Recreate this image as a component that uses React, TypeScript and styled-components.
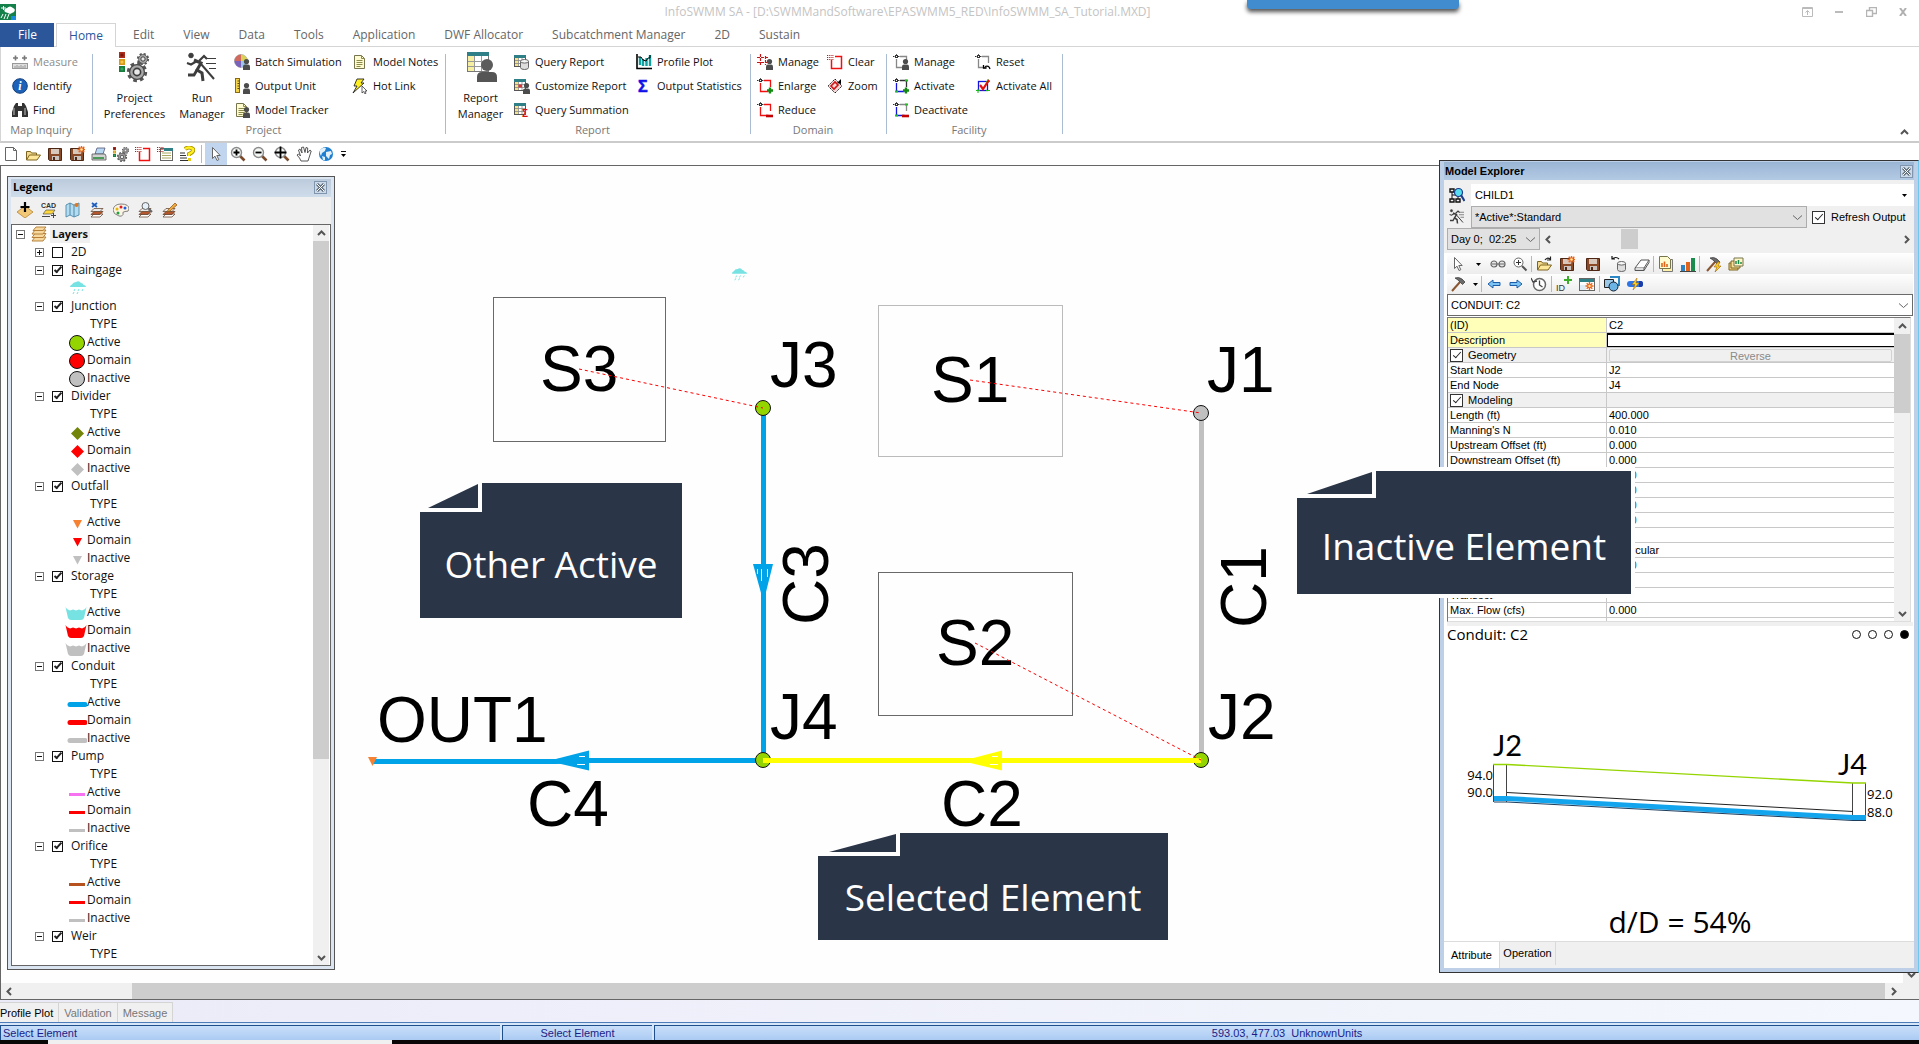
import React, { ReactNode } from "react";
import styled, { createGlobalStyle } from "styled-components";

const UI = `"Open Sans", "Noto Sans", sans-serif`;
const ARIAL = `"Liberation Sans", Arial, sans-serif`;

const Global = createGlobalStyle`
  *, *::before, *::after { box-sizing: border-box; }
  body { margin: 0; background: #fff; color: #111; font: 11px/16px ${UI}; overflow: hidden; }
  button, select, input { font: inherit; color: inherit; margin: 0; }
  button { border: 0; padding: 0; background: none; }
  svg { display: block; flex: none; }
`;

/* ---------- icon drawing parts ---------- */

const Svg = ({ s = 16, v = 16, children }: { s?: number; v?: number; children: ReactNode }) => (
  <svg width={s} height={s} viewBox={`0 0 ${v} ${v}`} aria-hidden="true">{children}</svg>
);
const Person = () => (
  <g fill="#4c4c4c"><circle cx="12.5" cy="7.5" r="2.6" /><path d="M9 16v-3.5q0-2 2-2h3q2 0 2 2V16z" /></g>
);
const Sheet = () => (
  <g>
    <rect x=".5" y="1.5" width="11" height="11" fill="#fff" stroke="#555" />
    <path d="M0 1h12v3H0z" fill="#2f7f86" />
    <path d="M1 4h3v8H1z" fill="#f1e48a" />
    <path d="M1 6.5h10M1 9.5h10M4.5 4v8M8 4v8" stroke="#888" strokeWidth=".8" />
  </g>
);
const Page = () => (
  <g>
    <path d="M2.5 1.5h7l3 3v10h-10z" fill="#fffbd0" stroke="#77754d" />
    <path d="M9.5 1.5v3h3M4.5 6.5h6M4.5 8.500h6M4.5 10.5h6M4.5 12.5h4" stroke="#8c8a4a" fill="none" />
  </g>
);
const Gear = ({ x, y, r }: { x: number; y: number; r: number }) => (
  <g transform={`translate(${x} ${y})`}>
    <circle r={r * 0.86} fill="none" stroke="#555" strokeWidth={r * 0.32} strokeDasharray={`${r * 0.36} ${r * 0.315}`} />
    <circle r={r * 0.74} fill="#a9a9a9" stroke="#4a4a4a" strokeWidth={r * 0.12} />
    <circle r={r * 0.36} fill="#e9e9e9" stroke="#3c3c3c" strokeWidth={r * 0.16} />
  </g>
);
const Lights = ({ k = 1 }: { k?: number }) => (
  <g transform={`scale(${k})`}>
    <path d="M0 0h6v6H0z" fill="#a92c1c" /><path d="M0 7h6v6H0z" fill="#d79a1a" /><path d="M0 14h6v6H0z" fill="#187c3c" />
    <circle cx="3" cy="3" r="1.6" fill="#7c1408" /><circle cx="3" cy="10" r="1.6" fill="#f4c84c" /><circle cx="3" cy="17" r="1.6" fill="#35a860" />
  </g>
);
const Lens = ({ sign }: { sign: string }) => (
  <g>
    <path d="M9.5 9.5l5 5" stroke="#7a4a2a" strokeWidth="2.6" />
    <circle cx="6.5" cy="6.5" r="5" fill="#f4f8f4" stroke="#8b8b8b" strokeWidth="1.4" />
    <path d={sign} stroke="#000" strokeWidth="1.8" fill="none" />
  </g>
);
const Floppy = () => (
  <g>
    <path d="M1.5 2.5h13v12h-12l-1-1z" fill="#8a4a28" stroke="#4c2612" />
    <path d="M4 3h8v5H4z" fill="#d8c8bc" /><path d="M5 10h7v4H5z" fill="#c9c4bf" /><path d="M6 11h2v3H6z" fill="#4c2612" />
  </g>
);
const Spark = ({ x = 12.5, y = 3.5 }: { x?: number; y?: number }) => (
  <g transform={`translate(${x} ${y})`}>
    <path d="M0-4V4M-4 0h8M-2.8-2.8l5.6 5.6M2.8-2.8l-5.6 5.6" stroke="#e8641c" strokeWidth="1.4" />
    <circle r="1.2" fill="#ffe9a0" />
  </g>
);
const Folder = () => (
  <g>
    <path d="M1.5 14V5.5h4l1 1.5h5v2" fill="#f2d98c" stroke="#7d6420" />
    <path d="M1.5 14l3-5h11l-3.5 5z" fill="#ffe79a" stroke="#7d6420" />
  </g>
);
const Pointer = () => <path d="M4.5 1.5v11l2.5-2.3 2 4.3 1.8-.8-2-4.2h3.4z" fill="#fff" stroke="#666" />;
const Hammer = () => (
  <g><path d="M2 15l8-9" stroke="#8a5630" strokeWidth="2" /><path d="M5 2q4-1.5 7 1l3 3-2.5 2.5-2-2L8 4z" fill="#6a6a6a" stroke="#333" strokeWidth=".7" /></g>
);
const Cylinder = () => (
  <g transform="translate(6 5)">
    <path d="M.5 2.5v6q0 2 4 2t4-2v-6z" fill="#dedede" stroke="#666" /><ellipse cx="4.5" cy="2.3" rx="4" ry="1.8" fill="#f7f7f7" stroke="#666" />
  </g>
);
const Stack = () => (
  <g stroke="#5c3a22" strokeWidth=".7">
    <path d="M2 15l3-3h9l-3 3z" fill="#fff" /><path d="M2 12.5l3-3h9l-3 3z" fill="#b4572f" /><path d="M2 9.5l3-3h9l-3 3z" fill="#e8e8e8" />
  </g>
);
const Frame = ({ left, right, corner }: { left: string; right: string; corner?: string }) => (
  <g fill="none">
    <path d="M0 2.5h1.5M5 2.5h1.500M3.5 0v.8" stroke="#333" />
    <rect x="2.5" y="1.5" width="2" height="2" stroke="#333" />
    <path d="M3.5 5v8.500h8" stroke={left} strokeWidth="1.3" />
    <path d="M7 2.5h6.500V9" stroke={right} strokeWidth="1.3" />
    {corner && <path d="M2 12.5h3v2H2zM12 1.5h3v2h-3z" fill={corner} />}
  </g>
);
const Plus = () => <path d="M10 12.5h6M13 9.5v6" stroke="#128a12" strokeWidth="2.4" />;
const Minus = () => <path d="M9 14h7" stroke="#c40000" strokeWidth="2.6" />;
const Hatch = () => <path d="M0 1.5h7M0 3.5h7M0 5.5h7" stroke="#b02020" strokeWidth="1.2" strokeDasharray="1.2 1" />;
const Runner = () => (
  <g fill="none" stroke="#3d3d3d">
    <circle cx="5" cy="3.5" r="2.3" fill="#3d3d3d" />
    <path d="M8 8l7 3-4 7 5 3 1 8" strokeWidth="3" /><path d="M11 18l-3 5H2" strokeWidth="2.8" />
    <path d="M11 9L5 12.5 1 11M13 9l5-5 3 3" strokeWidth="2.2" /><path d="M15 12l13 15" strokeWidth="2" />
    <path d="M20 6.5h10M20 11.5h10M23 16.5h7" strokeWidth="1.2" />
  </g>
);
const Globe = () => (
  <g><circle cx="8" cy="8" r="7" fill="#1f7fd0" /><path d="M2 4q3-3 6-2l-1 3-3 2-1 3-1-2zM8 6l5-1 1 3-2 1-1 4-3-3zM4 10l3 1v3H5z" fill="#e2f0f8" /></g>
);
const Bars = () => (
  <g><path d="M1 9h4v6H1z" fill="#2b84c4" /><path d="M6 6h4v9H6z" fill="#e0641c" /><path d="M11 2h4v13h-4z" fill="#1c8c4c" /><path d="M0 15.5h16" stroke="#444" /></g>
);
const Cloud = () => (
  <g>
    <path d="M0 6q0-2 2-2.5Q3 1 6 1q3-2 5 1 2 0 2.5 2Q16 4 16 6z" fill="#76e2e2" />
    <path d="M5 8l-1 2M9 8l-1 2M13 8l-1 2M4 11l-1 2M8 11l-1 2" stroke="#76e2e2" />
  </g>
);

const I: Record<string, ReactNode> = {
  measure: <Svg><path d="M1 4h5M10 4h5M3.5 1.5v5M12.5 1.5v5" stroke="#777" strokeWidth="1.6" /><rect x=".5" y="9.5" width="15" height="5" fill="#ddd" stroke="#999" /><path d="M3 12v2M5 11v3M7 12v2M9 11v3M11 12v2M13 11v3" stroke="#888" strokeWidth=".8" /></Svg>,
  identify: <Svg><circle cx="8" cy="8" r="7.3" fill="#1d62b8" stroke="#123f7c" /><text x="8" y="12" textAnchor="middle" fontFamily="Liberation Serif" fontStyle="italic" fontWeight="700" fontSize="12" fill="#fff">i</text></Svg>,
  find: <Svg><path d="M2 4l2-3h2v3h4V1h2l2 3 2 6v5h-6V9H6v6H0v-5z" fill="#333" /><path d="M2 6v7M13 6v7" stroke="#999" strokeWidth="1.4" /></Svg>,
  prefs: <Svg s={32} v={32}><Lights /><Gear x={24} y={7} r={6} /><Gear x={18} y={20} r={10} /></Svg>,
  run: <Svg s={32} v={32}><Runner /></Svg>,
  batch: <Svg><circle cx="7" cy="7" r="6.5" fill="#9cc7e8" stroke="#999" strokeWidth=".6" /><path d="M7 7V.5A6.5 6.5 0 0 1 13.5 7z" fill="#d8d058" /><path d="M7 7H.5A6.5 6.5 0 0 1 7 .5z" fill="#d16a5c" /><path d="M7 7v6.500A6.5 6.5 0 0 1 .5 7z" fill="#7a62b8" /><Person /></Svg>,
  unit: <Svg><rect x="1.5" y=".5" width="4" height="14" fill="#f4d44c" stroke="#8a6a10" /><path d="M3.5 3h2M3.5 5.5h2M3.5 8h2M3.5 10.5h2" stroke="#5c4400" /><Person /></Svg>,
  tracker: <Svg><Page /><Person /></Svg>,
  notes: <Svg><Page /></Svg>,
  hot: <Svg><path d="M5 1h7L9 5h3L1 15l4-7H2z" fill="#ffef20" stroke="#222" strokeWidth=".9" /><path d="M10 8v7l1.7-1.5L13 16l1-.6-1-2.400h2z" fill="#fff" stroke="#222" strokeWidth=".7" /></Svg>,
  reportBig: <Svg s={32} v={32}><rect x="2.5" y=".5" width="21" height="19" fill="#fff" stroke="#777" /><path d="M2 0h22v4H2z" fill="#2f7f86" /><path d="M3 4h6v15H3z" fill="#f6eea0" /><path d="M3 9.5h20M3 14.5h20M9.5 4v15M16.5 4v15" stroke="#999" /><circle cx="22" cy="13" r="6" fill="#5c5c5c" /><path d="M12 30v-5q0-5 5-5h10q5 0 5 5v5z" fill="#555" /></Svg>,
  queryReport: <Svg><Sheet /><Cylinder /></Svg>,
  customize: <Svg><Sheet /><path d="M4.5 6.5H8v3H4.5z" fill="#d33" /><Person /></Svg>,
  querySum: <Svg><Sheet /><text x="8" y="15" fontFamily="Liberation Sans" fontWeight="700" fontSize="10" fill="#d41414">Σ</text></Svg>,
  plot: <Svg><path d="M1 0v14.500h15" stroke="#000" strokeWidth="1.6" fill="none" /><path d="M4 3v8M7 5v7M10.5 4v8M14 1v11" stroke="#10a0a0" strokeWidth="2.4" /><path d="M2 3h3l2 3 3 1 2-3h2V1" stroke="#000" fill="none" /></Svg>,
  sigma: <Svg><text x="2" y="14" fontFamily="Liberation Sans" fontWeight="700" fontSize="16" stroke="#1010e8" strokeWidth=".6" fill="#1010e8">Σ</text></Svg>,
  domManage: <Svg><path d="M0 3.5h12M0 8.5h10M3.5 0v12M8.5 2v9" stroke="#c81414" strokeWidth="1.2" strokeDasharray="3 1" /><Person /></Svg>,
  domClear: <Svg><path d="M4.5 6v8.500h10v-12H8" stroke="#f01010" strokeWidth="1.5" fill="none" /><Hatch /></Svg>,
  domEnlarge: <Svg><Frame left="#f01010" right="#f01010" /><Plus /></Svg>,
  domZoom: <Svg><path d="M8 1l7 7-7 7-7-7z" fill="#f6dada" stroke="#222" strokeDasharray="1.5 .8" /><path d="M4 8l4-4 3 3-4 4z" fill="none" stroke="#d01414" strokeWidth="1.6" /><path d="M10 5l4-4v5z" fill="#000" /></Svg>,
  domReduce: <Svg><Frame left="#f01010" right="#f01010" /><Minus /></Svg>,
  facManage: <Svg><Frame left="#888" right="#888" /><Person /></Svg>,
  facActivate: <Svg><Frame left="#1414e0" right="#333" corner="#18c818" /><Plus /></Svg>,
  facDeactivate: <Svg><Frame left="#1414e0" right="#888" corner="#18c818" /><Minus /></Svg>,
  facReset: <Svg><Frame left="#888" right="#888" /><path d="M15 15q-1-4-5-2.5M8.5 11v3h3" stroke="#000" fill="none" strokeWidth="1.3" /></Svg>,
  facAll: <Svg><rect x="3.5" y="3.5" width="9" height="9" fill="#fff" stroke="#1414e0" strokeWidth="1.3" /><path d="M1 12.5h4M3 11v4M11 3.5h4M13 1v4M11 12.5h4" stroke="#18b818" /><path d="M5 7l3 4 6-9" stroke="#e01010" strokeWidth="2.2" fill="none" /></Svg>,

  newDoc: <Svg><path d="M2.5 1.5h8l3 3v10h-11z" fill="#fff" stroke="#666" /><path d="M10.5 1.5v3h3" fill="none" stroke="#666" /></Svg>,
  open: <Svg><Folder /></Svg>,
  openArrow: <Svg><Folder /><path d="M9 4q2-3 5-1M14.500 .5V4H11" stroke="#222" fill="none" strokeWidth="1.2" /></Svg>,
  save: <Svg><Floppy /></Svg>,
  saveStar: <Svg><Floppy /><Spark /></Svg>,
  print: <Svg><path d="M4 8l2-6h8l-2 6z" fill="#b6d8f2" stroke="#557" strokeWidth=".8" /><path d="M1 8h13l1 2v4H1z" fill="#d2d2d2" stroke="#555" strokeWidth=".8" /><path d="M2 12h11" stroke="#2a8c3a" strokeWidth="1.6" /></Svg>,
  gears: <Svg><g transform="translate(0 1)"><Lights k={0.5} /></g><Gear x={12.5} y={4.5} r={3.5} /><Gear x={9} y={11} r={5} /></Svg>,
  sheetStar: <Svg><rect x="3.5" y="2.5" width="12" height="12" fill="#fff" stroke="#666" /><path d="M5 7h9M5 9.5h9M5 12h9" stroke="#aaa860" /><path d="M7 2h9v3H7z" fill="#2f7f86" /><Hatch /></Svg>,
  help: <Svg><path d="M6 3q4-3 8 0 1 3-4 5v2" stroke="#a89000" strokeWidth="4" fill="none" /><path d="M6 3q4-3 8 0 1 3-4 5v2" stroke="#ffee20" strokeWidth="2.4" fill="none" /><path d="M1 7h5M1 9.5h6M1 12h7M1 14.5h8" stroke="#333" /><path d="M9 12h3v3H9z" fill="#e8cc10" /></Svg>,
  pointer: <Svg><Pointer /></Svg>,
  zoomIn: <Svg><Lens sign="M3.5 6.5h6M6.5 3.5v6" /></Svg>,
  zoomOut: <Svg><Lens sign="M3.5 6.5h6" /></Svg>,
  zoomAll: <Svg><Lens sign="M.5 6.5h12M6.5 .5v12" /></Svg>,
  hand: <Svg><path d="M5 15q-1-3-4-6l1.5-1 2 2L2.5 4 4 3l2 4L5.5 1.5 7.5 1 9 6.5 10 1.5l1.7.5L11.5 7 14 4l1.2 1L12 15z" fill="#fff" stroke="#444" strokeWidth=".9" /></Svg>,
  globe: <Svg><Globe /></Svg>,

  addLayer: <Svg><path d="M8 4l8 6-8 6-8-6z" fill="#f0c878" stroke="#b07820" strokeWidth=".7" /><path d="M8 0v10M3.5 5h9" stroke="#000" strokeWidth="2.2" /></Svg>,
  cad: <Svg><text x="0" y="6" fontFamily="Liberation Sans" fontWeight="700" fontSize="7" fill="#333">CAD</text><path d="M2 12l3-4h9l-3 4z" fill="#ffd83c" stroke="#555" strokeWidth=".7" /><path d="M1 14.5h8M10 13.5h5M12.5 11v5" stroke="#444" /></Svg>,
  map: <Svg><path d="M1 3l4-2 4 2 5-2v12l-5 2-4-2-4 2z" fill="#b4dcf0" stroke="#4c88ac" strokeWidth=".9" /><path d="M5 1v12M9 3v12" stroke="#4c88ac" fill="none" /><circle cx="11.5" cy="3" r="2" fill="#e07820" /></Svg>,
  dropLayer: <Svg><Stack /><path d="M3 1l5 4M8 1L3 5" stroke="#1c5cc0" strokeWidth="1.8" /></Svg>,
  palette: <Svg><path d="M8 2q8 0 8 5 0 3-4 2.5-3 0-2 3-1 2.5-4 1.5Q0 12 0 8q1-6 8-6z" fill="#fbf4e4" stroke="#666" strokeWidth=".8" /><circle cx="4" cy="7" r="1.5" fill="#e8b810" /><circle cx="8" cy="5" r="1.5" fill="#e02020" /><circle cx="12" cy="6" r="1.5" fill="#2060e0" /><circle cx="5" cy="11" r="1.5" fill="#20a040" /></Svg>,
  findLayer: <Svg><Stack /><path d="M11 6l4 4" stroke="#666" strokeWidth="2" /><circle cx="8.5" cy="4" r="3.5" fill="#e4f0fa" stroke="#666" /></Svg>,
  editLayer: <Svg><Stack /><path d="M7 8l7-7 2 2-7 6-3 1z" fill="#f0a840" stroke="#8a5010" strokeWidth=".7" /></Svg>,
  layers: <Svg><g fill="#f7d9a0" stroke="#b07830" strokeWidth=".9"><path d="M1 15l3-4h11l-3 4z" /><path d="M1 11.5l3-4h11l-3 4z" /><path d="M1 8l3-4h11l-3 4z" /><path d="M2 4.5L5 1h10l-3 3.5z" /></g></Svg>,

  tree: <Svg><path d="M1 2h4v3H1zM1 12h4v3H1zM7 12h4v3H7z" fill="none" stroke="#111" strokeWidth="1.4" /><path d="M3 5v7M3 8h6v4" stroke="#111" fill="none" /><circle cx="9.5" cy="5.5" r="4" fill="#58dcf0" stroke="#1c3c8c" strokeWidth="1.2" /><path d="M12 8l3.5 6" stroke="#1c3c8c" strokeWidth="2.2" /></Svg>,
  runSmall: <Svg v={32}><Runner /></Svg>,
  glasses: <Svg><g fill="#e8e8e8" stroke="#666" strokeWidth="1.2"><circle cx="4" cy="8" r="3" /><circle cx="12" cy="8" r="3" /></g><path d="M2 8h12" stroke="#666" /></Svg>,
  zoomThin: <Svg><path d="M10 10l4.5 4.5" stroke="#555" strokeWidth="2" /><circle cx="6.5" cy="6.5" r="4.5" fill="#fff" stroke="#666" /><path d="M4 6.5h5M6.5 4v5" stroke="#333" /></Svg>,
  db: <Svg><Cylinder /><path d="M8 3Q5 0 1 3M1 0v3h3" stroke="#111" fill="none" strokeWidth="1.2" /></Svg>,
  eraser: <Svg><path d="M1 12l6-8h8l-5 8z" fill="#fff" stroke="#555" /><path d="M1 12v2.5h9V12M10 14.5l5-8V4" fill="#ddd" stroke="#555" /></Svg>,
  report: <Svg><path d="M4.5 3.5h10v12h-10z" fill="#fff2a8" stroke="#777" /><path d="M1.5 .5h8l3 3v9h-11z" fill="#fffbd0" stroke="#77754d" /><path d="M4 7v4M6.5 5.5V11M9 8v3" stroke="#e0641c" strokeWidth="1.6" /></Svg>,
  bars: <Svg><Bars /></Svg>,
  hammerBolt: <Svg><Hammer /><path d="M13 6l-4 5h3l-2 5 6-6h-3l2-4z" fill="#ffd020" stroke="#a06000" strokeWidth=".6" /></Svg>,
  folders: <Svg><path d="M1 14V7h9v7z" fill="#f0d080" stroke="#7d6420" /><path d="M3 12V5h9v7z" fill="#f6e09c" stroke="#7d6420" /><path d="M6 10V2h9v8z" fill="#fff7c8" stroke="#77754d" /><path d="M8 8V5M10.5 8V4M13 8V6" stroke="#1c8c4c" strokeWidth="1.5" /></Svg>,
  hammer: <Svg><Hammer /></Svg>,
  left: <Svg><path d="M2 8l5-4v2.5h7v3H7V12z" fill="#7cc4f4" stroke="#1c5ca8" /></Svg>,
  right: <Svg><path d="M14 8L9 4v2.5H2v3h7V12z" fill="#7cc4f4" stroke="#1c5ca8" /></Svg>,
  history: <Svg><circle cx="8.5" cy="8.5" r="6" fill="#fff" stroke="#666" strokeWidth="1.5" /><path d="M8.5 4.5v4.5l3 2M0 2l2 4 4-1" fill="none" stroke="#444" strokeWidth="1.3" /></Svg>,
  idPlus: <Svg><text x="0" y="15" fontFamily="Liberation Sans" fontSize="9" fill="#333">ID</text><path d="M12 0v8M8 4h8" stroke="#3cae2c" strokeWidth="2" /></Svg>,
  tableSpark: <Svg><rect x=".5" y="2.5" width="15" height="12" fill="#fff" stroke="#666" /><path d="M1 3h14v3H1z" fill="#2f7f86" /><path d="M1 9h6v5H1z" fill="#e0ecf8" /><Spark x={10.5} y={10} /></Svg>,
  shapes: <Svg><path d="M.5 3.5h9v8h-9z" fill="#9cc8e8" stroke="#222" /><path d="M6 1h9v9" fill="none" stroke="#2c88c4" strokeWidth="2" /><circle cx="9.5" cy="10.5" r="4.5" fill="#6cb4e4" stroke="#123" /></Svg>,
  pipe: <Svg><rect x="0" y="5" width="16" height="6" rx="3" fill="#2c74e8" /><path d="M12 5h2a2 3 0 0 1 0 6h-2z" fill="#1c3ca8" /><path d="M10 2L5 8.5h3L6 14l6-7H9z" fill="#ffd020" stroke="#a06000" strokeWidth=".5" /></Svg>,
};

/* ---------- shared controls ---------- */

const Chevron = ({ d }: { d: "up" | "down" | "left" | "right" }) => (
  <svg width="9" height="9" viewBox="0 0 9 9" aria-hidden="true">
    <path
      d={{ up: "M1 6l3.5-3.5L8 6", down: "M1 3l3.5 3.5L8 3", left: "M6 1L2.5 4.5 6 8", right: "M3 1l3.5 3.5L3 8" }[d]}
      fill="none" stroke="#555" strokeWidth="2"
    />
  </svg>
);

const ScrollBtn = styled.button`
  display: grid;
  place-items: center;
  flex: none;
  width: 16px;
  height: 16px;
`;
const VTrack = styled.div`
  display: flex;
  flex-direction: column;
  flex: none;
  width: 16px;
  background: #f0f0f0;
`;
const VThumb = styled.div<{ $pct: number }>`
  flex: none;
  height: ${(p) => p.$pct}%;
  background: #cdcdcd;
`;
const Gap = styled.div`
  flex: 1;
`;
const VScroll = ({ pct }: { pct: number }) => (
  <VTrack>
    <ScrollBtn aria-label="Scroll up"><Chevron d="up" /></ScrollBtn>
    <VThumb $pct={pct} />
    <Gap />
    <ScrollBtn aria-label="Scroll down"><Chevron d="down" /></ScrollBtn>
  </VTrack>
);

const Check = styled.input.attrs({ type: "checkbox" })<{ $s: number; $c: string; $thin?: boolean }>`
  appearance: none;
  flex: none;
  display: grid;
  place-items: center;
  width: ${(p) => p.$s}px;
  height: ${(p) => p.$s}px;
  border: 1px solid ${(p) => p.$c};
  background: #fff;
  &:checked::before {
    content: "";
    width: 4px;
    height: 8px;
    margin-top: -2px;
    border: solid #222;
    border-width: ${(p) => (p.$thin ? "0 1px 1px 0" : "0 2px 2px 0")};
    rotate: 42deg;
  }
`;

const SelectBox = styled.span<{ $tone: "plain" | "grey" | "white" }>`
  position: relative;
  display: flex;
  flex: 1;
  height: 22px;
  border: 1px solid ${(p) => ({ plain: "#fff", grey: "#adadad", white: "#6a6a6a" })[p.$tone]};
  background: ${(p) => (p.$tone === "grey" ? "#e1e1e1" : "#fff")};
  select {
    flex: 1;
    width: 100%;
    appearance: none;
    border: 0;
    padding: 0 18px 0 3px;
    background: none;
  }
  svg {
    position: absolute;
    right: 4px;
    top: 6px;
    pointer-events: none;
  }
`;
const Thin = () => (
  <svg width="9" height="9" viewBox="0 0 9 9" aria-hidden="true"><path d="M0 2.5l4.5 4 4.5-4" fill="none" stroke="#666" /></svg>
);
const Caret = () => (
  <svg width="9" height="9" viewBox="0 0 9 9" aria-hidden="true"><path d="M2 3h5L4.5 6z" /></svg>
);
const CloseBtn = styled.button`
  display: grid;
  place-items: center;
  width: 13px;
  height: 13px;
  border: 1px solid #8096ae;
  background: #ccd9e8;
`;
const CloseX = () => (
  <svg width="9" height="9" viewBox="0 0 9 9" aria-hidden="true">
    <path d="M1 1l7 7M8 1L1 8" stroke="#5c6a7a" strokeWidth="3" /><path d="M1 1l7 7M8 1L1 8" stroke="#fff" />
  </svg>
);

/* ---------- application frame ---------- */

const Shell = styled.div`
  display: flex;
  flex-direction: column;
  height: 100vh;
`;
const TitleBar = styled.header`
  position: relative;
  display: grid;
  grid-template-columns: 24px 1fr 128px;
  align-items: center;
  height: 23px;
  color: #c4c4c4;
  font-size: 12px;
  text-align: center;
`;
const WinButtons = styled.div`
  display: grid;
  grid-template-columns: repeat(4, 32px);
  button { display: grid; place-items: center; height: 22px; }
`;
const Notch = styled.div`
  position: absolute;
  left: 65%;
  top: 0;
  width: 212px;
  height: 9px;
  border-radius: 0 0 4px 4px;
  background: #418ccf;
  box-shadow: 0 3px 4px #555;
`;
const Tabs = styled.nav`
  display: flex;
  height: 24px;
  border-bottom: 1px solid #d5d5d5;
  font-size: 12px;
`;
const Tab = styled.button<{ $kind?: "file" | "on" }>`
  height: 24px;
  padding: 0 14px 0 15px;
  color: #666;
  ${(p) => p.$kind === "file" && `width: 54px; background: #2b579a; color: #fff;`}
  ${(p) => p.$kind === "on" && `width: 60px; margin: 0 2px; padding: 0; background: #fff; color: #2b579a; border: 1px solid #d5d5d5; border-bottom: 0;`}
`;
const Ribbon = styled.div`
  display: flex;
  height: 96px;
  padding-top: 3px;
  border-bottom: 2px solid #cbcbcb;
  border-left: 1px solid #d5d5d5;
`;
const Group = styled.section<{ $w: number }>`
  position: relative;
  display: grid;
  grid-template-rows: 72px 18px;
  width: ${(p) => p.$w}px;
  &::after {
    content: "";
    position: absolute;
    right: 0;
    top: 4px;
    height: 80px;
    border-right: 1px solid #a9bcd3;
  }
`;
const GroupBody = styled.div`
  display: flex;
  padding-left: 6px;
`;
const GroupName = styled.div`
  padding-right: 12px;
  text-align: center;
  color: #777;
`;
const Col = styled.div<{ $w: number }>`
  display: grid;
  grid-auto-rows: 24px;
  flex: none;
  width: ${(p) => p.$w}px;
`;
const Item = styled.button`
  display: flex;
  align-items: center;
  gap: 5px;
  white-space: nowrap;
  text-align: left;
  &:disabled { color: #8c8c8c; }
`;
const Big = styled.button<{ $w: number }>`
  display: flex;
  flex-direction: column;
  align-items: center;
  justify-content: space-between;
  flex: none;
  width: ${(p) => p.$w}px;
  height: 72px;
  padding-top: 2px;
`;
const Collapse = styled.button`
  align-self: flex-end;
  margin: 0 10px 4px auto;
`;
const QuickBar = styled.div`
  display: flex;
  height: 22px;
`;
const Tool = styled.button<{ $w?: number; $on?: boolean }>`
  display: grid;
  place-items: center;
  flex: none;
  width: ${(p) => p.$w ?? 22}px;
  background: ${(p) => (p.$on ? "#c2d5ef" : "none")};
`;
const Sep = styled.span<{ $wide?: boolean }>`
  flex: none;
  width: 1px;
  margin: ${(p) => (p.$wide ? "2px 3px" : "2px 1px 2px 0")};
  background: #b9b9b9;
`;

const Workspace = styled.main`
  flex: 1;
  display: flex;
  flex-direction: column;
  min-height: 0;
  border: 1px solid #666;
  border-right: 0;
`;
const MapView = styled.div`
  position: relative;
  flex: 1;
  min-height: 0;
  background: #fefefe;
`;
const MapSvg = styled.svg`
  position: absolute;
  inset: 0;
  width: 100%;
  height: 100%;
`;
const MapEdge = styled.div`
  position: absolute;
  right: 0;
  bottom: 0;
  display: grid;
  justify-items: center;
  align-items: start;
  width: 16px;
  height: 13px;
  background: #f0f0f0;
`;
const HScroll = styled.div`
  display: flex;
  flex: none;
  height: 16px;
  padding-right: 18px;
  background: #f0f0f0;
`;
const HThumb = styled.div`
  flex: 1;
  margin-left: 115px;
  background: #cdcdcd;
`;

/* ---------- legend ---------- */

const LegendPanel = styled.aside`
  position: absolute;
  left: 6px;
  top: 10px;
  bottom: 13px;
  display: flex;
  flex-direction: column;
  width: 328px;
  padding: 2px 3px 3px;
  border: 1px solid #555;
  background: #dbe5f1;
`;
const LegendTitle = styled.div`
  display: flex;
  align-items: center;
  justify-content: space-between;
  height: 18px;
  padding: 0 4px 2px 2px;
  background: linear-gradient(#bccbdc, #cfdcea);
  font-weight: 700;
  color: #000;
`;
const LegendTools = styled.div`
  display: flex;
  height: 27px;
  padding: 0 0 2px 2px;
  background: #f0f0f0;
`;
const TreeBox = styled.div`
  flex: 1;
  display: flex;
  justify-content: space-between;
  min-height: 0;
  padding-right: 1px;
  border: 1px solid #666;
  background: #fff;
  font-size: 12px;
  overflow: hidden;
`;
const Tree = styled.ul`
  margin: 0;
  padding: 0 0 0 4px;
  list-style: none;
  ul { margin: 0; padding: 0 0 0 19px; list-style: none; }
`;
const TreeRow = styled.div`
  display: flex;
  align-items: center;
  height: 18px;
`;
const RootName = styled.span`
  margin-left: 3px;
  padding: 0 2px;
  background: #f0f0f0;
  font-size: 11px;
  font-weight: 700;
  line-height: 18px;
`;
const Expand = styled.button`
  flex: none;
  position: relative;
  width: 9px;
  height: 9px;
  border: 1px solid #777;
  background: linear-gradient(#111, #111) center / 5px 1px no-repeat;
  &[aria-expanded="false"] {
    background: linear-gradient(#111, #111) center / 5px 1px no-repeat, linear-gradient(#111, #111) center / 1px 5px no-repeat;
  }
`;
const LayerName = styled.label`
  display: flex;
  align-items: center;
  gap: 8px;
  margin-left: 8px;
  line-height: 16px;
`;
const Field = styled.div`
  height: 18px;
  padding-left: 55px;
  line-height: 18px;
`;
const ClassRow = styled.div`
  display: flex;
  align-items: center;
  height: 18px;
  padding-left: 30px;
  line-height: 16px;
`;
const RootIcon = styled.span`
  margin-left: 6px;
`;

type Shape = "circle" | "diamond" | "tri" | "tank" | "thick" | "thin";
const Swatch = ({ shape, color }: { shape: Shape; color: string }) => (
  <svg width="22" height="18" viewBox="0 0 22 18" aria-hidden="true">
    {shape === "circle" && <circle cx="12" cy="10" r="7.5" fill={color} stroke="#111" />}
    {shape === "diamond" && <path d="M12.5 4l6.5 6.5-6.5 6.5L6 10.500z" fill={color} />}
    {shape === "tri" && <path d="M8 7h9l-4.5 8.500z" fill={color} />}
    {shape === "tank" && <path d="M.5 4L2 6l3 1.5 3-1 3 1 3-1 3 1L20 6l1.5-2L19 15q-1 2-3 2H6q-2 0-3-2z" fill={color} />}
    {shape === "thick" && <path d="M5 11.5h15" stroke={color} strokeWidth="5" strokeLinecap="round" />}
    {shape === "thin" && <path d="M4 11.5h16" stroke={color} strokeWidth="3" />}
  </svg>
);

const LAYERS: { name: string; shape: Shape; colors: string[] }[] = [
  { name: "Junction", shape: "circle", colors: ["#94d500", "#ff0000", "#c0c0c0"] },
  { name: "Divider", shape: "diamond", colors: ["#728409", "#ff0000", "#c0c0c0"] },
  { name: "Outfall", shape: "tri", colors: ["#f58233", "#ff0000", "#c0c0c0"] },
  { name: "Storage", shape: "tank", colors: ["#76e2e2", "#ff0000", "#c0c0c0"] },
  { name: "Conduit", shape: "thick", colors: ["#00a2e8", "#ff0000", "#c0c0c0"] },
  { name: "Pump", shape: "thin", colors: ["#f772f0", "#ff0000", "#c0c0c0"] },
  { name: "Orifice", shape: "thin", colors: ["#b5521e", "#ff0000", "#c0c0c0"] },
  { name: "Weir", shape: "thin", colors: [] },
];

const Layer = ({ name, on = true, open = true, children }: { name: string; on?: boolean; open?: boolean; children?: ReactNode }) => (
  <li>
    <TreeRow>
      <Expand aria-expanded={open} aria-label={`Toggle ${name}`} />
      <LayerName><Check $s={11} $c="#111" defaultChecked={on} />{name}</LayerName>
    </TreeRow>
    {children}
  </li>
);

const Legend = () => (
  <LegendPanel aria-label="Legend">
    <LegendTitle>Legend<CloseBtn aria-label="Close legend"><CloseX /></CloseBtn></LegendTitle>
    <LegendTools>
      {["addLayer", "cad", "map", "dropLayer", "palette", "findLayer", "editLayer"].map((k) => (
        <Tool key={k} $w={24} aria-label={k}>{I[k]}</Tool>
      ))}
    </LegendTools>
    <TreeBox>
      <Tree>
        <li>
          <TreeRow>
            <Expand aria-expanded aria-label="Toggle layers" />
            <RootIcon>{I.layers}</RootIcon>
            <RootName>Layers</RootName>
          </TreeRow>
          <ul>
            <Layer name="2D" on={false} open={false} />
            <Layer name="Raingage"><ClassRow><Svg s={22} v={22}><g transform="translate(5 4)"><Cloud /></g></Svg></ClassRow></Layer>
            {LAYERS.map((l) => (
              <Layer key={l.name} name={l.name}>
                <Field>TYPE</Field>
                {l.colors.map((c, i) => (
                  <ClassRow key={c}><Swatch shape={l.shape} color={c} />{["Active", "Domain", "Inactive"][i]}</ClassRow>
                ))}
              </Layer>
            ))}
          </ul>
        </li>
      </Tree>
      <VScroll pct={70} />
    </TreeBox>
  </LegendPanel>
);

/* ---------- network map ---------- */

const MapText = styled.text`
  font: 64px ${ARIAL};
  fill: #000;
`;
const Link = styled.path<{ $c: string }>`
  fill: none;
  stroke: ${(p) => p.$c};
  stroke-width: 5px;
`;
const Area = styled.rect<{ $c: string }>`
  fill: none;
  stroke: ${(p) => p.$c};
`;
const Dash = styled.path`
  fill: none;
  stroke: #f00;
  stroke-dasharray: 3 3;
`;
const LABELS: [string, number, number][] = [
  ["S3", 540, 391], ["J3", 770, 387], ["S1", 931, 402], ["J1", 1207, 392], ["S2", 936, 665],
  ["OUT1", 377, 742], ["J4", 770, 739], ["C4", 527, 826], ["C2", 941, 826], ["J2", 1208, 739],
];
const NODES: [number, number, string][] = [
  [763, 408, "#94d500"], [1201, 413, "#c0c0c0"], [763, 760, "#94d500"], [1201, 760, "#94d500"],
];

const NetworkMap = () => (
  <MapSvg role="img" aria-label="Drainage network">
    <g transform="translate(-1 -166)">
      <g transform="translate(732 268) scale(.94)"><Cloud /></g>
      <Area $c="#696969" x="493.5" y="297.5" width="172" height="144" />
      <Area $c="#bbb" x="878.5" y="305.5" width="184" height="151" />
      <Area $c="#696969" x="878.5" y="572.5" width="194" height="143" />
      {LABELS.map(([t, x, y]) => <MapText key={t} x={x} y={y}>{t}</MapText>)}
      <MapText transform="translate(828 625) rotate(-90)">C3</MapText>
      <MapText transform="translate(1266 628) rotate(-90)">C1</MapText>
      <Link $c="#c0c0c0" d="M1201.5 413v347" />
      <Link $c="#00a2e8" d="M763.5 408v352.500H580L556 761.5H372" />
      <path d="M753 564h20l-9.5 38z" fill="#00a2e8" />
      <path d="M757.5 569v5M761.5 569v12M767.5 569v8" stroke="#fff" />
      <path d="M589 750.5v20l-41-9.5z" fill="#00a2e8" />
      <path d="M585 756.5h-6M585 764.5h-8" stroke="#fff" />
      <path d="M368 757h9l-4.5 9z" fill="#f58233" />
      {NODES.map(([x, y, c]) => <circle key={`${x}-${y}`} cx={x} cy={y} r="7.5" fill={c} stroke="#111" />)}
      <Link $c="#ff0" d="M763 760.5h438" />
      <path d="M1002 750.5v20l-40-9.5z" fill="#ff0" />
      <path d="M998 756.5h-6M998 764.5h-8" stroke="#fff" />
      <Dash d="M579 369l184 39" /><Dash d="M970 380l231 33" /><Dash d="M975 643l226 117" />
    </g>
  </MapSvg>
);

const Note = styled.div<{ $x: number; $y: number; $w: number; $h: number; $top: number; $ring?: boolean }>`
  position: absolute;
  z-index: 3;
  left: ${(p) => p.$x}px;
  top: ${(p) => p.$y}px;
  display: grid;
  place-items: center;
  width: ${(p) => p.$w}px;
  height: ${(p) => p.$h}px;
  padding-top: ${(p) => p.$top}px;
  background: #2b3548;
  outline: ${(p) => (p.$ring ? 4 : 0)}px solid #fefefe;
  color: #fff;
  font-size: 37px;
  line-height: 40px;
  white-space: nowrap;
  svg { position: absolute; left: 0; top: 0; }
`;
const Fold = ({ w, h }: { w: number; h: number }) => (
  <svg width={w} height={h} viewBox={`0 0 ${w} ${h}`} aria-hidden="true">
    <path d={`M0 0h${w}v${h}H0z`} fill="#fefefe" />
    <path d={`M${Math.round(w * 0.13)} ${h - 4}L${w - 4} 1v${h - 5}z`} fill="#2b3548" />
  </svg>
);

/* ---------- model explorer ---------- */

const Explorer = styled.aside`
  position: absolute;
  z-index: 2;
  right: 0;
  top: -6px;
  bottom: 10px;
  display: flex;
  flex-direction: column;
  width: 480px;
  padding: 1px 4px 4px;
  border: 1px solid #333;
  border-right-color: #6cc8ec;
  background: #bdd0e8;
  font: 11px/15px ${ARIAL};
  color: #000;
`;
const ExplorerTitle = styled.div`
  display: flex;
  align-items: center;
  justify-content: space-between;
  height: 18px;
  padding: 0 1px;
  background: linear-gradient(#9ab5d4, #b4cae4);
  font-weight: 700;
`;
const Form = styled.div`
  display: grid;
  padding: 4px 0 3px 3px;
  background: #f0f0f0;
`;
const FormRow = styled.div`
  display: flex;
  align-items: center;
`;
const IconCell = styled.span`
  width: 24px;
  padding-left: 2px;
`;
const Refresh = styled.label`
  display: flex;
  align-items: center;
  gap: 6px;
  width: 107px;
  padding-left: 5px;
`;
const Narrow = styled.span`
  display: flex;
  width: 93px;
`;
const Range = styled.input.attrs({ type: "range" })`
  flex: 1;
  appearance: none;
  height: 20px;
  background: #f0f0f0;
  &::-webkit-slider-thumb {
    appearance: none;
    width: 17px;
    height: 20px;
    background: #cdcdcd;
  }
`;
const Body = styled.div`
  flex: 1;
  display: flex;
  flex-direction: column;
  min-height: 0;
  padding: 1px 1px 0 3px;
  background: #fff;
`;
const ToolRow = styled.div`
  display: flex;
  flex: none;
  height: 20px;
  background: linear-gradient(#fefefe, #ececec);
`;
const ElementSelect = styled.div`
  display: flex;
  flex: none;
`;
const GridWrap = styled.div`
  display: flex;
  flex: none;
  height: 305px;
  margin: 1px 2px 0 0;
  border: 1px solid #777;
  border-right-color: #ddd;
  border-bottom-color: #ddd;
  overflow: hidden;
`;
const GridClip = styled.div`
  flex: 1;
  overflow: hidden;
`;
const Grid = styled.table`
  width: 100%;
  border-collapse: separate;
  border-spacing: 0;
  table-layout: fixed;
  td, th {
    height: 15px;
    padding: 0 2px;
    border: solid #c8c8c8;
    border-width: 0 1px 1px 0;
    font-weight: 400;
    line-height: 14px;
    text-align: left;
    white-space: nowrap;
    overflow: hidden;
  }
  td { border-right: 0; }
  th { width: 159px; }
`;
const GridRow = styled.tr<{ $kind?: "key" | "section" }>`
  th { background: ${(p) => ({ key: "#ffffb9", section: "#f0f0f0", none: "#fff" })[p.$kind ?? "none"]}; }
  td { background: ${(p) => (p.$kind === "section" ? "#f0f0f0" : "#fff")}; }
`;
const Focused = styled.input`
  display: block;
  width: calc(100% + 5px);
  height: 14px;
  margin: 0 -2px;
  border: 1px solid #000;
  border-top-width: 2px;
  background: #fff;
`;
const SectionLabel = styled.label`
  display: flex;
  align-items: center;
  gap: 5px;
  height: 14px;
`;
const Reverse = styled.button`
  display: block;
  width: 100%;
  height: 13px;
  border: 1px solid #d2d2d2;
  border-radius: 2px;
  color: #8a8a8a;
  line-height: 12px;
`;
const Blue = styled.span`
  color: #0a64b4;
`;
const Preview = styled.div`
  flex: 1;
  min-height: 0;
  border-top: 4px solid #f0f0f0;
  font-family: ${UI};
`;
const PreviewHead = styled.div`
  display: flex;
  align-items: center;
  justify-content: space-between;
  height: 16px;
  padding-right: 4px;
  font-size: 15px;
`;
const Dots = styled.div`
  display: flex;
  gap: 7px;
`;
const Dot = styled.button<{ $on?: boolean }>`
  width: 9px;
  height: 9px;
  border: 1px solid #111;
  border-radius: 50%;
  background: ${(p) => (p.$on ? "#000" : "#fff")};
`;
const ProfileSvg = styled.svg`
  width: 465px;
  height: 300px;
  .node { font: 29px Lato, sans-serif; }
  .elev { font: 13px ${UI}; }
  .ratio { font: 30px ${UI}; }
`;
const BottomTabs = styled.div`
  display: flex;
  flex: none;
  height: 27px;
  border-top: 1px solid #dcdcdc;
  background: #f0f0f0;
`;
const BottomTab = styled.button<{ $on?: boolean }>`
  height: ${(p) => (p.$on ? 26 : 23)}px;
  width: 56px;
  border: 1px solid #d9d9d9;
  border-width: 0 1px 0 0;
  background: ${(p) => (p.$on ? "#fff" : "#f0f0f0")};
`;

type Prop = { k: string; v?: ReactNode; kind?: "key" | "section" };
const PROPS: Prop[] = [
  { k: "(ID)", v: "C2", kind: "key" },
  { k: "Description", v: <Focused aria-label="Description" />, kind: "key" },
  { k: "Geometry", v: <Reverse disabled>Reverse</Reverse>, kind: "section" },
  { k: "Start Node", v: "J2" },
  { k: "End Node", v: "J4" },
  { k: "Modeling", kind: "section" },
  { k: "Length (ft)", v: "400.000" },
  { k: "Manning's N", v: "0.010" },
  { k: "Upstream Offset (ft)", v: "0.000" },
  { k: "Downstream Offset (ft)", v: "0.000" },
  { k: "", v: <Blue>0.000</Blue> },
  { k: "", v: <Blue>0.000</Blue> },
  { k: "", v: <Blue>0.000</Blue> },
  { k: "", v: <Blue>0.000</Blue> },
  { k: "" },
  { k: "", v: "1: Circular" },
  { k: "", v: <Blue>0.000</Blue> },
  { k: "" },
  { k: "Transect" },
  { k: "Max. Flow (cfs)", v: "0.000" },
  { k: "Shape Curve" },
];

type ToolSpec = [string, number] | "|";
const ROW1: ToolSpec[] = [["pointer", 22], ["", 18], ["glasses", 22], ["zoomThin", 22], "|", ["openArrow", 22], ["saveStar", 24], ["save", 28], ["db", 24], ["eraser", 22], "|", ["report", 22], ["bars", 22], "|", ["hammerBolt", 24], ["folders", 22]];
const ROW2: ToolSpec[] = [["hammer", 22], ["", 12], "|", ["left", 22], ["right", 22], ["history", 24], "|", ["idPlus", 22], ["tableSpark", 24], "|", ["shapes", 22], ["pipe", 24]];
const Tools = ({ list }: { list: ToolSpec[] }) => (
  <ToolRow>
    {list.map((t, i) => (t === "|" ? <Sep key={i} /> : <Tool key={i} $w={t[1]} aria-label={t[0] || "More"}>{t[0] ? I[t[0]] : <Caret />}</Tool>))}
  </ToolRow>
);

const ModelExplorer = () => (
  <Explorer aria-label="Model Explorer">
    <ExplorerTitle>Model Explorer<CloseBtn aria-label="Close explorer"><CloseX /></CloseBtn></ExplorerTitle>
    <Form>
      <FormRow>
        <IconCell>{I.tree}</IconCell>
        <SelectBox $tone="plain"><select aria-label="Scenario"><option>CHILD1</option></select><Caret /></SelectBox>
      </FormRow>
      <FormRow>
        <IconCell>{I.runSmall}</IconCell>
        <SelectBox $tone="grey"><select aria-label="Output"><option>*Active*:Standard</option></select><Thin /></SelectBox>
        <Refresh><Check $s={13} $c="#333" $thin defaultChecked />Refresh Output</Refresh>
      </FormRow>
      <FormRow>
        <Narrow><SelectBox $tone="grey"><select aria-label="Time"><option>Day 0;&nbsp; 02:25</option></select><Thin /></SelectBox></Narrow>
        <ScrollBtn aria-label="Earlier"><Chevron d="left" /></ScrollBtn>
        <Range aria-label="Time step" defaultValue={20} />
        <ScrollBtn aria-label="Later"><Chevron d="right" /></ScrollBtn>
      </FormRow>
    </Form>
    <Body>
      <Tools list={ROW1} />
      <Tools list={ROW2} />
      <ElementSelect>
        <SelectBox $tone="white"><select aria-label="Element"><option>CONDUIT: C2</option></select><Thin /></SelectBox>
      </ElementSelect>
      <GridWrap>
        <GridClip>
          <Grid>
            <tbody>
              {PROPS.map((p, i) => (
                <GridRow key={i} $kind={p.kind}>
                  <th scope="row">{p.kind === "section" ? <SectionLabel><Check $s={13} $c="#333" $thin defaultChecked />{p.k}</SectionLabel> : p.k}</th>
                  <td>{p.v}</td>
                </GridRow>
              ))}
            </tbody>
          </Grid>
        </GridClip>
        <VScroll pct={26} />
      </GridWrap>
      <Preview>
        <PreviewHead>
          Conduit: C2
          <Dots><Dot aria-label="View 1" /><Dot aria-label="View 2" /><Dot aria-label="View 3" /><Dot $on aria-label="View 4" /></Dots>
        </PreviewHead>
        <ProfileSvg viewBox="1447 642 465 300" role="img" aria-label="Conduit profile">
          <path d="M1493.5 764v38M1506.5 764v38M1852.5 783v37M1865.5 783v37" stroke="#444" />
          <path d="M1507 792.5l346 19" stroke="#222" />
          <path d="M1494 796h13l346 19h13v5h-13l-346-19h-13z" fill="#12a5ee" />
          <path d="M1494 802h13l346 18.5h13" stroke="#1c3c5c" fill="none" />
          <path d="M1493 764.5h14l346 18.5h13" stroke="#94d500" strokeWidth="1.3" fill="none" />
          <text className="node" x="1493" y="756">J2</text>
          <text className="node" x="1838" y="775">J4</text>
          <text className="elev" x="1493" y="780" textAnchor="end">94.0</text>
          <text className="elev" x="1493" y="797" textAnchor="end">90.0</text>
          <text className="elev" x="1867" y="799">92.0</text>
          <text className="elev" x="1867" y="817">88.0</text>
          <text className="ratio" x="1680" y="933" textAnchor="middle">d/D = 54%</text>
        </ProfileSvg>
      </Preview>
    </Body>
    <BottomTabs>
      <BottomTab $on>Attribute</BottomTab>
      <BottomTab>Operation</BottomTab>
    </BottomTabs>
  </Explorer>
);

/* ---------- bottom bars ---------- */

const OutputTabs = styled.div`
  display: flex;
  align-items: flex-end;
  flex: none;
  height: 22px;
  background: linear-gradient(90deg, #ebebf8, #f4f7fd);
  font-family: ${ARIAL};
`;
const OutputTab = styled.button<{ $on?: boolean }>`
  height: 20px;
  padding: 1px 5px 0 ${(p) => (p.$on ? 0 : 5)}px;
  border: 1px solid #d4d4d4;
  border-width: 1px 1px 0 0;
  background: #f0f0f0;
  color: ${(p) => (p.$on ? "#000" : "#777")};
`;
const Status = styled.footer`
  display: grid;
  grid-template-columns: 500px 150px 1fr;
  gap: 2px;
  flex: none;
  height: 18px;
  padding-top: 2px;
  border-top: 1px solid #4d7db8;
  background: #d7e6f8;
  font-family: ${ARIAL};
  line-height: 14px;
  color: #1c1c86;
`;
const StatusCell = styled.div<{ $left?: boolean }>`
  height: 15px;
  padding-left: ${(p) => (p.$left ? 2 : 0)}px;
  border: 1px solid #1f4f8c;
  border-width: 1px 0 0 1px;
  background: linear-gradient(#c9dffa, #abcaf2);
  text-align: ${(p) => (p.$left ? "left" : "center")};
`;
const Taskbar = styled.div`
  flex: none;
  height: 4px;
  background: linear-gradient(90deg, #0a0806 48px, #f0f0f0 48px 392px, #0a0608 392px);
`;

const RibbonItem = ({ icon, label, off }: { icon: string; label: string; off?: boolean }) => (
  <Item disabled={off}>{I[icon]}{label}</Item>
);

export default function App() {
  return (
    <Shell>
      <Global />
      <TitleBar>
        <svg width="16" height="16" viewBox="0 0 16 16" aria-hidden="true">
          <path d="M0 0h16v16H0z" fill="#14804a" /><path d="M11 12h5v4h-5z" fill="#1c8ce0" />
          <path d="M5 8q-2-3 2-4 3-3 6 0 3 1 1 4l-4 2-2-1z" fill="#fff" /><path d="M1 4h5M3.5 2v4M3 10l-2 4M6 10l-2 5M9 10l-2 5" stroke="#fff" />
        </svg>
        <span>InfoSWMM SA - [D:\SWMMandSoftware\EPASWMM5_RED\InfoSWMM_SA_Tutorial.MXD]</span>
        <WinButtons>
          <button aria-label="Ribbon options"><svg width="11" height="10" viewBox="0 0 11 10"><path d="M.5 .5h10v9H.5zM0 1.5h11M5.5 8V4M3.5 5.5l2-2 2 2" fill="none" stroke="#bbb" /></svg></button>
          <button aria-label="Minimize"><svg width="8" height="2" viewBox="0 0 8 2"><path d="M0 0h8v2H0z" fill="#bbb" /></svg></button>
          <button aria-label="Restore"><svg width="11" height="10" viewBox="0 0 11 10"><path d="M.5 3.5h6v6h-6zM3.5 3V.5h7v6H7" fill="none" stroke="#b4b4b4" strokeWidth="1.4" /></svg></button>
          <button aria-label="Close"><svg width="8" height="8" viewBox="0 0 8 8"><path d="M1 0l6 8M7 0L1 8" stroke="#b0b0b0" strokeWidth="2" /></svg></button>
        </WinButtons>
        <Notch />
      </TitleBar>
      <Tabs>
        <Tab $kind="file">File</Tab>
        <Tab $kind="on">Home</Tab>
        {["Edit", "View", "Data", "Tools", "Application", "DWF Allocator", "Subcatchment Manager", "2D", "Sustain"].map((t) => <Tab key={t}>{t}</Tab>)}
      </Tabs>
      <Ribbon>
        <Group $w={92}>
          <GroupBody>
            <Col $w={5} />
            <Col $w={78}><RibbonItem icon="measure" label="Measure" off /><RibbonItem icon="identify" label="Identify" /><RibbonItem icon="find" label="Find" /></Col>
          </GroupBody>
          <GroupName>Map Inquiry</GroupName>
        </Group>
        <Group $w={353}>
          <GroupBody>
            <Big $w={71}>{I.prefs}<span>Project<br />Preferences</span></Big>
            <Big $w={64}>{I.run}<span>Run<br />Manager</span></Big>
            <Col $w={118}><RibbonItem icon="batch" label="Batch Simulation" /><RibbonItem icon="unit" label="Output Unit" /><RibbonItem icon="tracker" label="Model Tracker" /></Col>
            <Col $w={92}><RibbonItem icon="notes" label="Model Notes" /><RibbonItem icon="hot" label="Hot Link" /></Col>
          </GroupBody>
          <GroupName>Project</GroupName>
        </Group>
        <Group $w={305}>
          <GroupBody>
            <Big $w={57}>{I.reportBig}<span>Report<br />Manager</span></Big>
            <Col $w={5} />
            <Col $w={122}><RibbonItem icon="queryReport" label="Query Report" /><RibbonItem icon="customize" label="Customize Report" /><RibbonItem icon="querySum" label="Query Summation" /></Col>
            <Col $w={112}><RibbonItem icon="plot" label="Profile Plot" /><RibbonItem icon="sigma" label="Output Statistics" /></Col>
          </GroupBody>
          <GroupName>Report</GroupName>
        </Group>
        <Group $w={136}>
          <GroupBody>
            <Col $w={70}><RibbonItem icon="domManage" label="Manage" /><RibbonItem icon="domEnlarge" label="Enlarge" /><RibbonItem icon="domReduce" label="Reduce" /></Col>
            <Col $w={58}><RibbonItem icon="domClear" label="Clear" /><RibbonItem icon="domZoom" label="Zoom" /></Col>
          </GroupBody>
          <GroupName>Domain</GroupName>
        </Group>
        <Group $w={176}>
          <GroupBody>
            <Col $w={82}><RibbonItem icon="facManage" label="Manage" /><RibbonItem icon="facActivate" label="Activate" /><RibbonItem icon="facDeactivate" label="Deactivate" /></Col>
            <Col $w={82}><RibbonItem icon="facReset" label="Reset" /><RibbonItem icon="facAll" label="Activate All" /></Col>
          </GroupBody>
          <GroupName>Facility</GroupName>
        </Group>
        <Collapse aria-label="Collapse ribbon"><Chevron d="up" /></Collapse>
      </Ribbon>
      <QuickBar>
        {["newDoc", "open", "save", "saveStar", "print", "gears", "domClear", "sheetStar", "help"].map((k) => <Tool key={k} aria-label={k}>{I[k]}</Tool>)}
        <Sep $wide />
        <Tool $on aria-label="Select">{I.pointer}</Tool>
        {["zoomIn", "zoomOut", "zoomAll", "hand", "globe"].map((k) => <Tool key={k} aria-label={k}>{I[k]}</Tool>)}
        <Tool $w={12} aria-label="More tools"><svg width="7" height="9" viewBox="0 0 7 9"><path d="M1 1.5h5" stroke="#111" /><path d="M1 4h5L3.5 7z" /></svg></Tool>
      </QuickBar>
      <Workspace>
        <MapView>
          <NetworkMap />
          <Legend />
          <MapEdge><Chevron d="down" /></MapEdge>
          <ModelExplorer />
          <Note $x={419} $y={317} $w={262} $h={135} $top={26}><Fold w={62} h={29} />Other Active</Note>
          <Note $x={817} $y={667} $w={350} $h={107} $top={20}><Fold w={82} h={23} />Selected Element</Note>
          <Note $x={1296} $y={305} $w={334} $h={123} $top={26} $ring><Fold w={79} h={27} />Inactive Element</Note>
        </MapView>
        <HScroll>
          <ScrollBtn aria-label="Scroll left"><Chevron d="left" /></ScrollBtn>
          <HThumb />
          <ScrollBtn aria-label="Scroll right"><Chevron d="right" /></ScrollBtn>
        </HScroll>
      </Workspace>
      <OutputTabs>
        <OutputTab $on>Profile Plot</OutputTab>
        <OutputTab>Validation</OutputTab>
        <OutputTab>Message</OutputTab>
      </OutputTabs>
      <Status>
        <StatusCell $left>Select Element</StatusCell>
        <StatusCell>Select Element</StatusCell>
        <StatusCell>593.03, 477.03&nbsp; UnknownUnits</StatusCell>
      </Status>
      <Taskbar />
    </Shell>
  );
}
